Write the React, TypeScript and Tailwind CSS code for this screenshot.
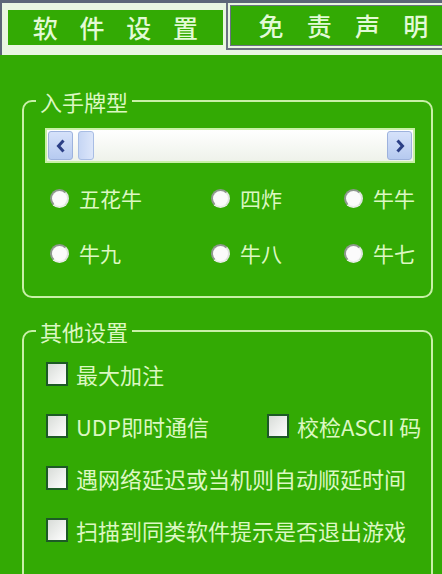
import React from "react";

const font = { fontFamily: '"Noto Sans CJK SC", "Liberation Sans", sans-serif' };

function Radio({ label }: { label: string }) {
  return (
    <div className="flex items-center gap-[10px]">
      <span className="w-[19px] h-[19px] rounded-full bg-[#fbfbfb] border-2 border-[#8e988e] border-b-[#e8ece8] border-r-[#dfe4df]" />
      <span className="text-[21px] leading-none text-[#dcf8c2]">{label}</span>
    </div>
  );
}

function Check({ label }: { label: string }) {
  return (
    <div className="flex items-center gap-[8px]">
      <span className="w-[22px] h-[24px] border-2 border-[#1d5a26] bg-gradient-to-br from-[#d8dcd8] to-white shrink-0" />
      <span className="text-[22px] leading-none text-[#dcf8c2] whitespace-nowrap">{label}</span>
    </div>
  );
}

function Chevron({ dir }: { dir: "l" | "r" }) {
  return (
    <svg width="12" height="16" viewBox="0 0 12 16">
      <path
        d={dir === "l" ? "M8.5 2.5 L3.5 8 L8.5 13.5" : "M3.5 2.5 L8.5 8 L3.5 13.5"}
        fill="none"
        stroke="#2b3f86"
        strokeWidth="3"
      />
    </svg>
  );
}

export default function App() {
  return (
    <div className="w-[442px] h-[574px] bg-[#33aa04] overflow-hidden" style={font}>
      {/* tab bar */}
      <div className="h-[55px] bg-[#e9f6e2] border-t-[3px] border-l-2 border-[#5c6678] flex items-start">
        <div className="ml-[6px] mt-[7px] w-[215px] h-[35px] bg-[#33aa04] flex items-center justify-around px-[14px] text-[25px] leading-none font-medium text-[#e2fad6]">
          <span>软</span>
          <span>件</span>
          <span>设</span>
          <span>置</span>
        </div>
        <div className="ml-[3px] flex-1 h-[47px] border-l-2 border-b-2 border-[#6a7282] p-[2px] pr-0 bg-[#e9f6e2]">
          <div className="h-full border border-r-0 border-[#6a7282] bg-[#33aa04] flex items-center justify-around pl-[16px] pr-[2px] text-[25px] leading-none font-medium text-[#e2fad6]">
            <span>免</span>
            <span>责</span>
            <span>声</span>
            <span>明</span>
          </div>
        </div>
      </div>

      {/* group 1 */}
      <fieldset className="ml-[22px] mr-[9px] mt-[35px] border-2 border-[#c8f0a8] rounded-[10px] pb-[32px]">
        <legend className="ml-[12px] px-[4px] text-[22px] leading-[22px] text-[#dcf8c2]">入手牌型</legend>
        <div className="ml-[21px] mt-[16px] w-[370px] h-[35px] border-2 border-[#c8f0a8] bg-gradient-to-b from-[#ffffff] to-[#eef2ea] flex items-center px-[1px] gap-[5px]">
          <div className="w-[25px] h-[29px] rounded-[3px] border border-[#9db2dd] bg-gradient-to-b from-[#d6e2fa] to-[#b6caf0] flex items-center justify-center">
            <Chevron dir="l" />
          </div>
          <div className="w-[16px] h-[29px] rounded-[3px] border border-[#a8bde4] bg-gradient-to-r from-[#c6d6f4] to-[#dce6fa]" />
          <div className="flex-1" />
          <div className="w-[25px] h-[29px] rounded-[3px] border border-[#9db2dd] bg-gradient-to-b from-[#d6e2fa] to-[#b6caf0] flex items-center justify-center">
            <Chevron dir="r" />
          </div>
        </div>
        <div className="ml-[26px] mt-[25px] grid grid-cols-[161px_133px_auto] gap-y-[34px]">
          <Radio label="五花牛" />
          <Radio label="四炸" />
          <Radio label="牛牛" />
          <Radio label="牛九" />
          <Radio label="牛八" />
          <Radio label="牛七" />
        </div>
      </fieldset>

      {/* group 2 */}
      <fieldset className="ml-[22px] mr-[9px] mt-[22px] h-[320px] border-2 border-[#c8f0a8] rounded-[10px]">
        <legend className="ml-[12px] px-[4px] text-[22px] leading-[22px] text-[#dcf8c2]">其他设置</legend>
        <div className="ml-[22px] mt-[20px] flex flex-col gap-[28px]">
          <Check label="最大加注" />
          <div className="flex">
            <div className="w-[221px]">
              <Check label="UDP即时通信" />
            </div>
            <Check label="校检ASCII 码" />
          </div>
          <Check label="遇网络延迟或当机则自动顺延时间" />
          <Check label="扫描到同类软件提示是否退出游戏" />
        </div>
      </fieldset>
    </div>
  );
}
